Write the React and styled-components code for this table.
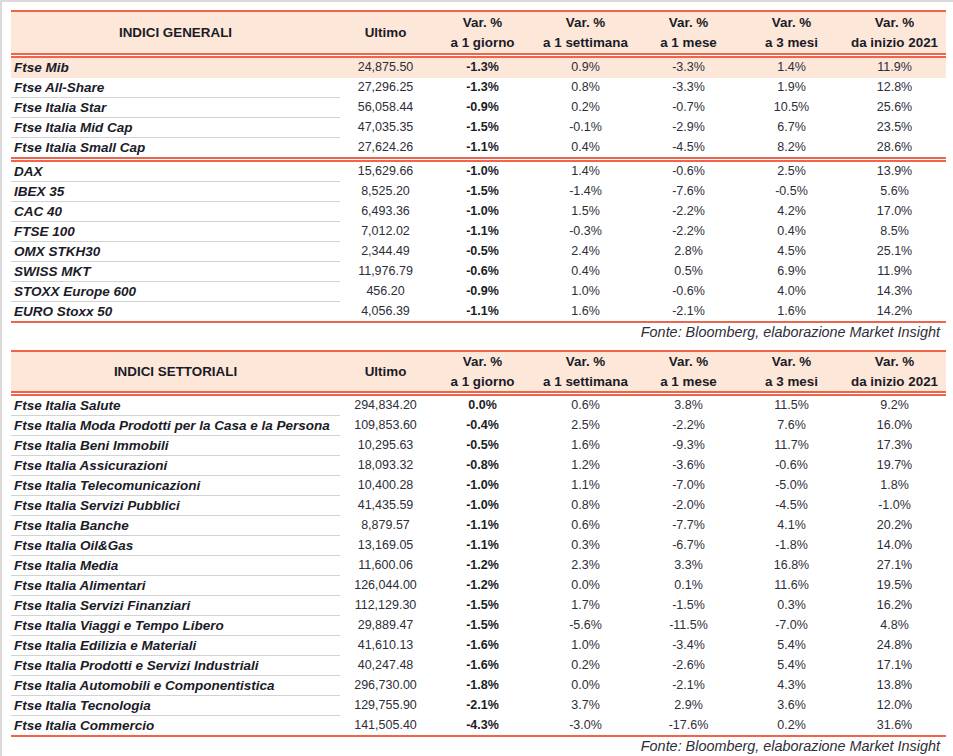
import styled, { createGlobalStyle } from "styled-components";

const RED = "#f0644c";
const PEACH = "#fce7d9";
const INK = "#1b1b28";

const generali = [
  [
    ["Ftse Mib", "24,875.50", "-1.3%", "0.9%", "-3.3%", "1.4%", "11.9%", true],
    ["Ftse All-Share", "27,296.25", "-1.3%", "0.8%", "-3.3%", "1.9%", "12.8%"],
    ["Ftse Italia Star", "56,058.44", "-0.9%", "0.2%", "-0.7%", "10.5%", "25.6%"],
    ["Ftse Italia Mid Cap", "47,035.35", "-1.5%", "-0.1%", "-2.9%", "6.7%", "23.5%"],
    ["Ftse Italia Small Cap", "27,624.26", "-1.1%", "0.4%", "-4.5%", "8.2%", "28.6%"],
  ],
  [
    ["DAX", "15,629.66", "-1.0%", "1.4%", "-0.6%", "2.5%", "13.9%"],
    ["IBEX 35", "8,525.20", "-1.5%", "-1.4%", "-7.6%", "-0.5%", "5.6%"],
    ["CAC 40", "6,493.36", "-1.0%", "1.5%", "-2.2%", "4.2%", "17.0%"],
    ["FTSE 100", "7,012.02", "-1.1%", "-0.3%", "-2.2%", "0.4%", "8.5%"],
    ["OMX STKH30", "2,344.49", "-0.5%", "2.4%", "2.8%", "4.5%", "25.1%"],
    ["SWISS MKT", "11,976.79", "-0.6%", "0.4%", "0.5%", "6.9%", "11.9%"],
    ["STOXX Europe 600", "456.20", "-0.9%", "1.0%", "-0.6%", "4.0%", "14.3%"],
    ["EURO Stoxx 50", "4,056.39", "-1.1%", "1.6%", "-2.1%", "1.6%", "14.2%"],
  ],
];

const settoriali = [
  [
    ["Ftse Italia Salute", "294,834.20", "0.0%", "0.6%", "3.8%", "11.5%", "9.2%"],
    ["Ftse Italia Moda Prodotti per la Casa e la Persona", "109,853.60", "-0.4%", "2.5%", "-2.2%", "7.6%", "16.0%"],
    ["Ftse Italia Beni Immobili", "10,295.63", "-0.5%", "1.6%", "-9.3%", "11.7%", "17.3%"],
    ["Ftse Italia Assicurazioni", "18,093.32", "-0.8%", "1.2%", "-3.6%", "-0.6%", "19.7%"],
    ["Ftse Italia Telecomunicazioni", "10,400.28", "-1.0%", "1.1%", "-7.0%", "-5.0%", "1.8%"],
    ["Ftse Italia Servizi Pubblici", "41,435.59", "-1.0%", "0.8%", "-2.0%", "-4.5%", "-1.0%"],
    ["Ftse Italia Banche", "8,879.57", "-1.1%", "0.6%", "-7.7%", "4.1%", "20.2%"],
    ["Ftse Italia Oil&Gas", "13,169.05", "-1.1%", "0.3%", "-6.7%", "-1.8%", "14.0%"],
    ["Ftse Italia Media", "11,600.06", "-1.2%", "2.3%", "3.3%", "16.8%", "27.1%"],
    ["Ftse Italia Alimentari", "126,044.00", "-1.2%", "0.0%", "0.1%", "11.6%", "19.5%"],
    ["Ftse Italia Servizi Finanziari", "112,129.30", "-1.5%", "1.7%", "-1.5%", "0.3%", "16.2%"],
    ["Ftse Italia Viaggi e Tempo Libero", "29,889.47", "-1.5%", "-5.6%", "-11.5%", "-7.0%", "4.8%"],
    ["Ftse Italia Edilizia e Materiali", "41,610.13", "-1.6%", "1.0%", "-3.4%", "5.4%", "24.8%"],
    ["Ftse Italia Prodotti e Servizi Industriali", "40,247.48", "-1.6%", "0.2%", "-2.6%", "5.4%", "17.1%"],
    ["Ftse Italia Automobili e Componentistica", "296,730.00", "-1.8%", "0.0%", "-2.1%", "4.3%", "13.8%"],
    ["Ftse Italia Tecnologia", "129,755.90", "-2.1%", "3.7%", "2.9%", "3.6%", "12.0%"],
    ["Ftse Italia Commercio", "141,505.40", "-4.3%", "-3.0%", "-17.6%", "0.2%", "31.6%"],
  ],
];

const periods = [
  ["Var. %", "a 1 giorno"],
  ["Var. %", "a 1 settimana"],
  ["Var. %", "a 1 mese"],
  ["Var. %", "a 3 mesi"],
  ["Var. %", "da inizio 2021"],
];

const GlobalStyle = createGlobalStyle`
  body {
    margin: 0;
    background: #fff;
    font-family: "Liberation Sans", Arial, sans-serif;
    color: ${INK};
  }
`;

const Frame = styled.div`
  box-sizing: border-box;
  min-height: 100vh;
  border-top: 2px solid #dadada;
  border-left: 2px solid #dadada;
  padding: 8px 0 0 9px;
`;

const Table = styled.div`
  width: 935px;
  border-top: 2px solid ${RED};
  border-bottom: 2px solid ${RED};
`;

const cols = "329px 91px repeat(5, 103px)";

const HeadRow = styled.div`
  display: grid;
  grid-template-columns: ${cols};
  height: ${(p) => p.$h}px;
  background: ${PEACH};
`;

const HeadCell = styled.div`
  display: flex;
  flex-direction: column;
  align-items: center;
  justify-content: center;
  font-size: 13.4px;
  font-weight: 700;
  line-height: 20px;
  white-space: nowrap;
`;

const DoubleRule = styled.div`
  height: 1px;
  border-top: 2px solid ${RED};
  border-bottom: 2px solid ${RED};
  background: #fff;
`;

const Row = styled.div`
  display: grid;
  grid-template-columns: ${cols};
  height: ${(p) => (p.$last ? 19 : 20)}px;
  background: ${(p) => (p.$hl ? PEACH : "transparent")};
`;

const NameCell = styled.div`
  box-sizing: border-box;
  padding-left: 3px;
  font-size: 13.5px;
  font-weight: 700;
  font-style: italic;
  line-height: 19px;
  white-space: nowrap;
  border-bottom: 1px solid ${(p) => (p.$rule ? "#d3d3d3" : "transparent")};
`;

const NumCell = styled.div`
  text-align: center;
  font-size: 12.5px;
  font-weight: ${(p) => (p.$bold ? 700 : 400)};
  color: ${(p) => (p.$bold ? INK : "#2e2e38")};
  line-height: 19px;
  white-space: nowrap;
`;

const Source = styled.div`
  width: 935px;
  text-align: right;
  box-sizing: border-box;
  padding-right: 6px;
  font-size: 14.4px;
  font-style: italic;
  color: #2e2e38;
  line-height: 18px;
  margin-bottom: ${(p) => p.$gap}px;
`;

function Block({ title, groups, headHeight, gap }) {
  return (
    <>
      <Table>
        <HeadRow $h={headHeight}>
          <HeadCell>{title}</HeadCell>
          <HeadCell>Ultimo</HeadCell>
          {periods.map(([a, b]) => (
            <HeadCell key={b}>
              <span>{a}</span>
              <span>{b}</span>
            </HeadCell>
          ))}
        </HeadRow>
        {groups.map((rows, gi) => (
          <div key={gi}>
            <DoubleRule />
            {rows.map(([name, last, d1, w1, m1, m3, ytd, hl], i) => {
              const isLast = i === rows.length - 1;
              return (
                <Row key={name} $last={isLast} $hl={hl}>
                  <NameCell $rule={!isLast && !hl}>{name}</NameCell>
                  <NumCell>{last}</NumCell>
                  <NumCell $bold>{d1}</NumCell>
                  <NumCell>{w1}</NumCell>
                  <NumCell>{m1}</NumCell>
                  <NumCell>{m3}</NumCell>
                  <NumCell>{ytd}</NumCell>
                </Row>
              );
            })}
          </div>
        ))}
      </Table>
      <Source $gap={gap}>Fonte: Bloomberg, elaborazione Market Insight</Source>
    </>
  );
}

export default function App() {
  return (
    <>
      <GlobalStyle />
      <Frame>
        <Block title="INDICI GENERALI" groups={generali} headHeight={41} gap={9} />
        <Block title="INDICI SETTORIALI" groups={settoriali} headHeight={39} gap={0} />
      </Frame>
    </>
  );
}
